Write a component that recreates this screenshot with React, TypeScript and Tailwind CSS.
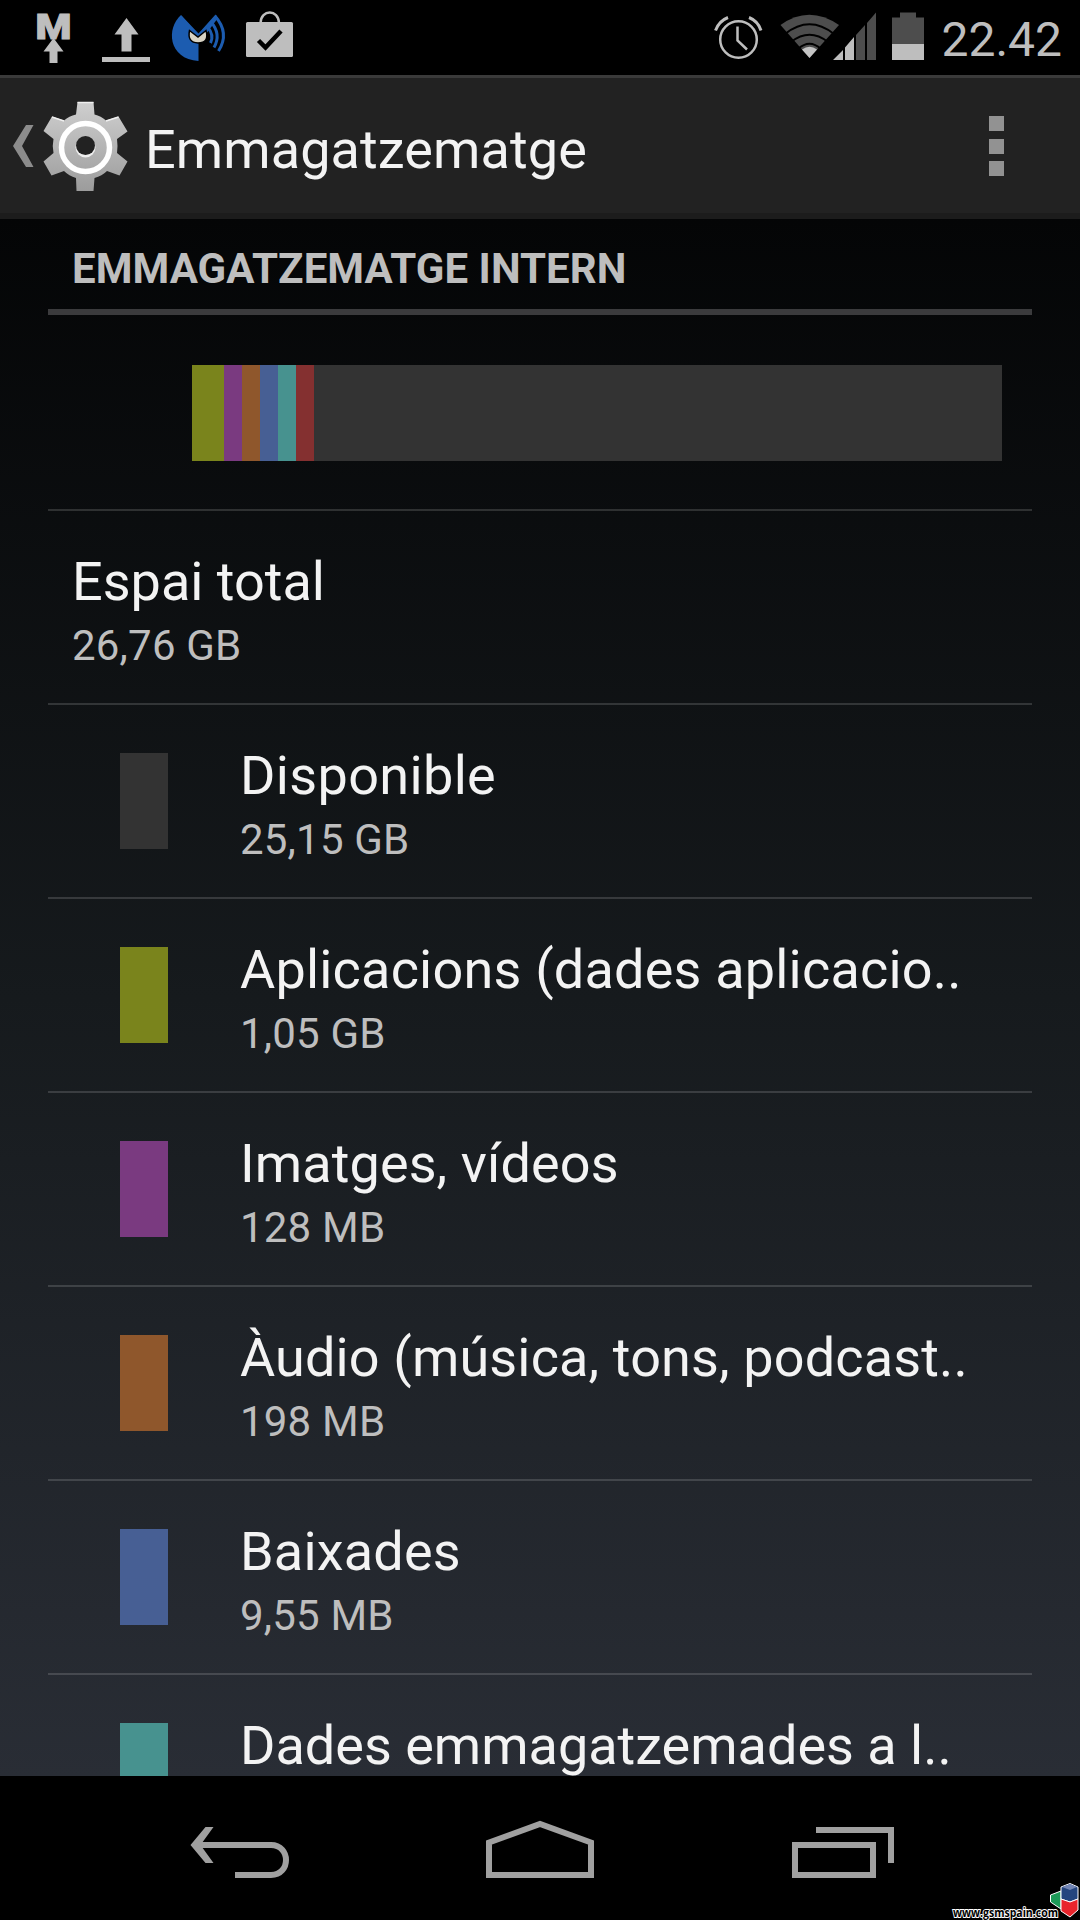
const rows = [
  { title: 'Disponible', value: '25,15 GB', swatch: 'bg-[#333333]', tracking: 'tracking-[0.35px]' },
  { title: 'Aplicacions (dades aplicacio..', value: '1,05 GB', swatch: 'bg-[#7a841c]', tracking: 'tracking-[0.2px]' },
  { title: 'Imatges, vídeos', value: '128 MB', swatch: 'bg-[#7a3a80]', tracking: 'tracking-[0.1px]' },
  { title: 'Àudio (música, tons, podcast..', value: '198 MB', swatch: 'bg-[#8f572c]', tracking: 'tracking-[0.14px]' },
  { title: 'Baixades', value: '9,55 MB', swatch: 'bg-[#475f94]', tracking: 'tracking-[0.2px]' },
  { title: 'Dades emmagatzemades a l..', value: '', swatch: 'bg-[#47928f]', tracking: 'tracking-normal' },
];

function StatusBar() {
  return (
    <div className="h-[75px] shrink-0 bg-black flex items-center justify-between pr-[18px]">
      <svg width="320" height="75" viewBox="0 0 320 75" fill="#bebebe">
        {/* Upload "M" */}
        <text x="35.5" y="38.5" fontFamily="Roboto" fontWeight="900" fontSize="35" textLength="36" lengthAdjust="spacingAndGlyphs" stroke="#bebebe" strokeWidth="1">M</text>
        <path d="M53.5 38 L63.5 51.5 H57.5 V63 H49.5 V51.5 H43.5Z" />

        {/* Upload */}
        <path d="M126.5 18 L138.5 34.5 H131.5 V51.5 H121.5 V34.5 H114.5Z" />
        <rect x="102" y="57" width="48" height="5" />

        {/* Antivirus */}
        <path d="M181 15 C166 28 168 59 198.5 61 V36Z" fill="#1c5cb0" />
        <path d="M181 15 L198.5 33.5 L215.5 14.5 L218 18 L203 38 H190Z" fill="#1c5cb0" />
        <g fill="none" stroke="#1c5cb0" strokeWidth="3">
          <path d="M215 16 Q230 33 218.5 51" />
          <path d="M211 22 Q221.5 34 214 47.5" />
          <path d="M207.5 27 Q214.5 35 210.5 43" />
        </g>
        <path d="M189.5 30.5 L198 37 L206 30.5 Q209.500 43 198 43 Q187 42.500 189.500 30.500Z" fill="#d8d3c4" stroke="#000" strokeWidth="1.5" />

        {/* Shopping bag */}
        <path d="M260.5 23 C261 9 278.5 9 279 23" fill="none" stroke="#bebebe" strokeWidth="2.5" />
        <rect x="246" y="22" width="47" height="35" rx="1.5" />
        <path d="M258.5 40.5 L265.5 47.5 L281 31" fill="none" stroke="#000" strokeWidth="4.5" />
      </svg>

      <div className="flex items-center">
        <svg width="230" height="75" viewBox="710 0 230 75">
          {/* Alarm */}
          <g fill="none" stroke="#bebebe">
            <circle cx="737.5" cy="39.5" r="18.3" strokeWidth="2.5" />
            <path d="M714.5 30.5 Q718 21 727 17.5 M760 30.5 Q757 21 748 17.5" strokeWidth="3" />
            <path d="M736.5 26.5 V40.5 L746 49.5" strokeWidth="2.5" />
          </g>

          {/* Wifi */}
          <path d="M808.5 58 L779.5 25 Q808 4.500 838 25Z" fill="#4d4d4d" />
          <g fill="none" stroke="#000" strokeWidth="2">
            <path d="M784 34 Q808.5 14.5 833 34" />
            <path d="M790 42 Q808.5 27.5 827 42" />
            <path d="M797 49 Q808.5 38.5 820 49" />
          </g>
          <path d="M808.5 58 L801 49.5 Q808.5 44 816 49.5Z" fill="#c4c4c4" />

          {/* Signal */}
          <path d="M832 60 L842 50 V60Z M844 47.5 L853 37 V60 H844Z" fill="#bebebe" />
          <path d="M855 35 L864 25 V60 H855Z M866 23 L875 12.5 V60 H866Z" fill="#4d4d4d" />

          {/* Battery */}
          <path d="M899 12.5 H915 V17.5 H923 V44 H891 V17.5 H899Z" fill="#4d4d4d" />
          <rect x="891" y="44" width="32" height="16" fill="#bebebe" />
        </svg>
        <span className="text-[48px] leading-[75px] pt-1 text-[#bebebe]">22.42</span>
      </div>
    </div>
  );
}

function GearIcon() {
  return (
    <svg width="90" height="96" viewBox="40 98 90 96">
      <defs>
        <linearGradient id="gear" x1="0" y1="0" x2="0" y2="1">
          <stop offset="0" stopColor="#cfcfcf" />
          <stop offset="1" stopColor="#9c9c9c" />
        </linearGradient>
      </defs>
      <path
        fill="url(#gear)"
        d="M77.5 102 H93.5 L94.5 114.5 Q101 116 106 120.5 L118.5 116.5 L127.5 131.5 L117 139 Q118 146 117 153 L127.5 161.5 L119.5 175.5 L107 171 Q102 176 94.5 178 L93.5 191 H76.5 L76 178 Q69 176 64 171 L51.5 175.5 L43.5 161.5 L53.5 153 Q52 146 53.5 139 L43.5 131 L52 116.5 L64 120.5 Q69 116 76 114.5Z"
      />
      <path d="M77.5 102.5 H93.5 M52 117 L64 121 M106 121 L118.5 117" stroke="#f0f0f0" strokeWidth="1.5" />
      <circle cx="85.5" cy="147.5" r="24" fill="none" stroke="#fff" strokeWidth="5.5" />
      <circle cx="85.5" cy="147.5" r="10" fill="#eee" />
      <circle cx="85.5" cy="145.5" r="9.5" fill="#222" />
    </svg>
  );
}

function ActionBar() {
  return (
    <div className="h-36 shrink-0 bg-[#222222] border-t-[3px] border-[#3a3a3a] pb-[5px] flex items-center shadow-[inset_0_-6px_0_#1c1c1c]">
      <svg className="ml-3 shrink-0" width="22" height="44" viewBox="0 0 22 44">
        <path d="M14 1 H21.5 L10 22 L21.5 43 H14 L1 22Z" fill="#8c8c8c" />
      </svg>
      <div className="ml-1.5">
        <GearIcon />
      </div>
      <h1 className="ml-[15px] pt-[7px] text-[54px] leading-none tracking-[0.1px] text-[#f3f3f3]">Emmagatzematge</h1>
      <div className="ml-auto mr-[76px] flex flex-col gap-[7.5px]">
        <div className="size-[15px] bg-[#929292]" />
        <div className="size-[15px] bg-[#929292]" />
        <div className="size-[15px] bg-[#929292]" />
      </div>
    </div>
  );
}

function UsageBar() {
  return (
    <div className="h-[196px] border-b-2 border-white/15 pt-[50px] pl-36 pr-[30px]">
      <div className="h-24 flex bg-[#333333]">
        <div className="w-8 bg-[#7a841c]" />
        <div className="w-[18px] bg-[#7a3a80]" />
        <div className="w-[18px] bg-[#8f572c]" />
        <div className="w-[18px] bg-[#475f94]" />
        <div className="w-[18px] bg-[#47928f]" />
        <div className="w-[18px] bg-[#843030]" />
      </div>
    </div>
  );
}

function NavBar() {
  return (
    <div className="h-36 shrink-0 bg-black relative">
      <svg width="1080" height="144" viewBox="0 1776 1080 144" fill="none" stroke="#a0a0a0" strokeWidth="6">
        <path d="M198 1845 H271 C291 1845 291 1875 271 1875 H235" />
        <path d="M205.5 1827 H213.5 L200.5 1845 L213.5 1863 H205.5 L190.5 1845Z" fill="#a0a0a0" stroke="none" />
        <path d="M489 1875 V1842.5 L540 1824 L591 1842.5 V1875Z" />
        <path d="M795 1845 H873 V1875 H795Z" />
        <path d="M816 1830 H891 V1863" />
      </svg>
      <div className="absolute right-0 bottom-0">
        <svg width="130" height="40" viewBox="950 1880 130 40">
          <g stroke="#fff" strokeWidth="1" strokeLinejoin="round">
            <path d="M1050.500 1895 L1061 1891 V1909 L1050.500 1902Z" fill="#1d9a58" />
            <path d="M1061 1887 L1070 1883.5 L1078 1887 V1899 L1070 1902 L1061 1899Z" fill="#24457e" />
            <path d="M1061 1899 L1070 1902 L1078 1899 V1910 L1070 1917 L1061 1911Z" fill="#e8242c" />
          </g>
          <path d="M1062 1887 L1070 1884 L1077 1887 L1070 1890Z" fill="#7285b4" />
          <text x="953" y="1917" fontFamily="Open Sans" fontWeight="700" fontSize="12.5" textLength="105" lengthAdjust="spacingAndGlyphs" fill="#000" stroke="#fff" strokeWidth="2" paintOrder="stroke">www.gsmspain.com</text>
        </svg>
      </div>
    </div>
  );
}

export default function App() {
  return (
    <div className="w-[1080px] h-[1920px] flex flex-col overflow-hidden bg-black font-['Roboto',sans-serif]">
      <StatusBar />
      <ActionBar />
      <div className="flex-1 min-h-0 overflow-hidden px-12 bg-linear-to-b/srgb from-[#040506] via-[#161a1d] to-[#292d35]">
        <div className="h-24 border-b-[6px] border-[#3b3b3d] pl-6 pt-2.5 flex items-center">
          <h2 className="text-[42px] leading-none font-bold tracking-[0.05px] text-[#bebebe]">EMMAGATZEMATGE INTERN</h2>
        </div>
        <UsageBar />
        <div className="h-[194px] border-b-2 border-white/15 pl-6 pt-[39px]">
          <div className="text-[54px] leading-[64px] text-[#f3f3f3]">Espai total</div>
          <div className="text-[42px] leading-[64px] tracking-[0.2px] text-[#bebebe]">26,76 GB</div>
        </div>
        {rows.map((row) => (
          <div key={row.title} className="h-[194px] border-b-2 border-white/15 pl-[72px] flex items-start">
            <div className={`mt-12 w-12 h-24 shrink-0 ${row.swatch}`} />
            <div className="ml-[72px] pt-[39px] whitespace-nowrap">
              <div className={`text-[54px] leading-[64px] text-[#f3f3f3] ${row.tracking}`}>{row.title}</div>
              <div className="text-[42px] leading-[64px] tracking-[0.2px] text-[#bebebe]">{row.value}</div>
            </div>
          </div>
        ))}
      </div>
      <NavBar />
    </div>
  );
}
